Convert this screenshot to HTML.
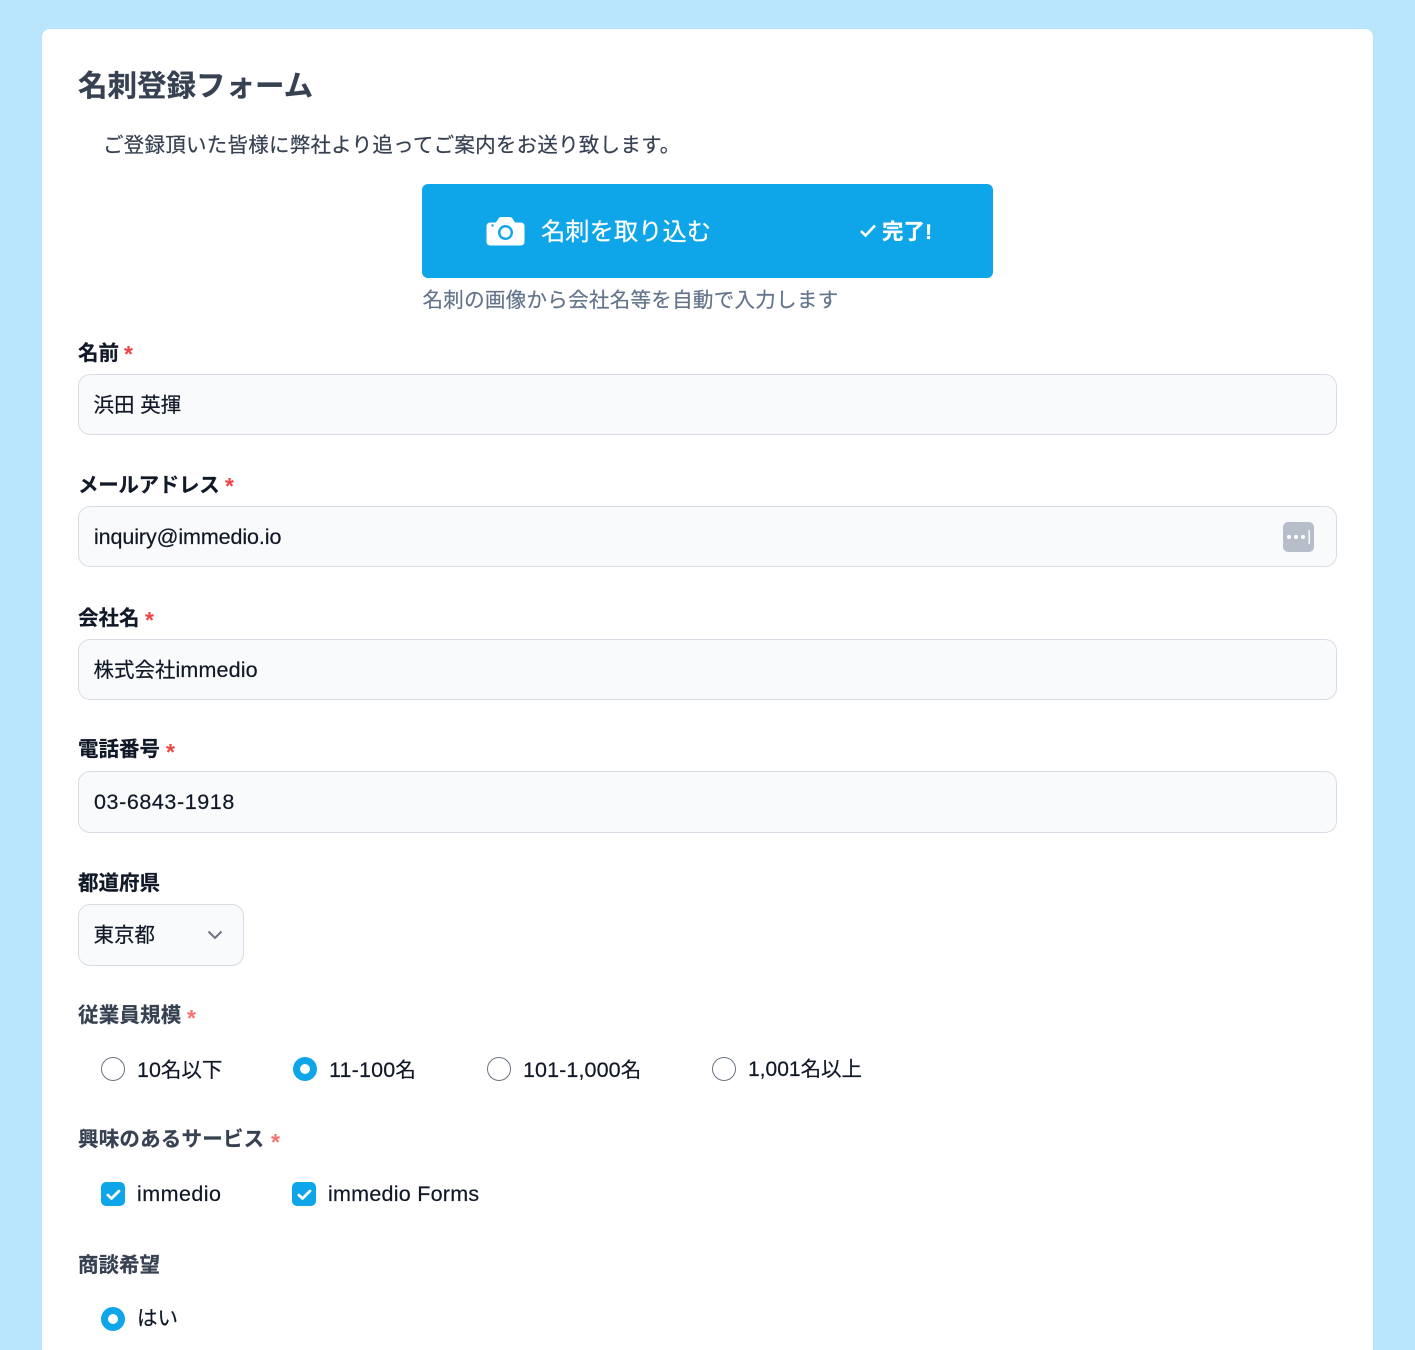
<!DOCTYPE html>
<html lang="ja">
<head>
<meta charset="utf-8">
<style>
html,body{margin:0;padding:0;width:1415px;height:1350px;overflow:hidden;background:#bae6fd;}
body{font-family:"Liberation Sans","Noto Sans CJK JP",sans-serif;position:relative;}
.card{position:absolute;left:42px;top:29px;width:1331px;height:1340px;background:#fff;border-radius:8px;}
.t{position:absolute;white-space:nowrap;line-height:28px;font-size:20.5px;color:#111827;-webkit-text-stroke:.2px currentColor;}
.l{font-size:21.5px;}
.b{font-weight:700;}
.g{color:#374151;}
.s{position:absolute;font-size:23px;line-height:28px;font-weight:700;color:#ef4444;}
.s2{color:#f87171;}
.i{position:absolute;left:78px;width:1257px;height:59px;background:#f9fafb;border:1px solid #d9dde3;border-radius:12px;}
.r{position:absolute;width:22px;height:22px;border:1px solid #6b7280;border-radius:50%;background:#fff;}
.ro{position:absolute;width:24px;height:24px;border-radius:50%;background:#0ea5e9;}
.ro:after{content:"";position:absolute;left:7px;top:7px;width:10px;height:10px;border-radius:50%;background:#fff;}
.c{position:absolute;width:24px;height:24px;border-radius:5px;background:#0ea5e9;}
.c svg{display:block;}
</style>
</head>
<body>
<div class="card"></div>

<div class="t b g" style="left:78px;top:69px;font-size:29.5px;line-height:36px;">名刺登録フォーム</div>
<div class="t g" style="left:103px;top:132px;letter-spacing:.25px;">ご登録頂いた皆様に弊社より追ってご案内をお送り致します。</div>

<div style="position:absolute;left:422px;top:184px;width:571px;height:94px;background:#0ea5e9;border-radius:6px;"></div>
<svg style="position:absolute;left:486px;top:216px;" width="39" height="30" viewBox="0 0 39 30">
  <path d="M4.500 6.500H10L12.500 2.500Q13.500 1 15.500 1H23.500Q25.500 1 26.500 2.500L29 6.500H34.500Q38.500 6.500 38.500 10.500V25.500Q38.500 29.500 34.500 29.500H4.500Q.5 29.500 .5 25.500V10.500Q.5 6.500 4.500 6.500z" fill="#fff"/>
  <circle cx="19.500" cy="16.500" r="6.300" fill="none" stroke="#0ea5e9" stroke-width="2.400"/>
  <circle cx="6.500" cy="9.500" r="1.200" fill="#0ea5e9"/>
</svg>
<div class="t" style="left:541px;top:219px;font-size:24.3px;color:#fff;">名刺を取り込む</div>
<svg style="position:absolute;left:859px;top:223px;" width="18" height="15" viewBox="0 0 18 15">
  <path d="M2 8l4.500 4.500L16 2.500" fill="none" stroke="#fff" stroke-width="2.600"/>
</svg>
<div class="t b" style="left:882px;top:218px;font-size:21.500px;color:#fff;">完了!</div>
<div class="t" style="left:422.500px;top:287px;color:#64748b;letter-spacing:.3px;">名刺の画像から会社名等を自動で入力します</div>

<div class="t b" style="left:78px;top:340px;">名前</div><div class="s" style="left:124px;top:340px;">*</div>
<div class="i" style="top:374px;"></div>
<div class="t" style="left:93.500px;top:392px;">浜田 英揮</div>

<div class="t b" style="left:78px;top:472px;letter-spacing:-.3px;">メールアドレス</div><div class="s" style="left:225px;top:472px;">*</div>
<div class="i" style="top:506px;"></div>
<div class="t l" style="left:94px;top:523px;letter-spacing:-.1px;">inquiry@immedio.io</div>
<svg style="position:absolute;left:1283px;top:522px;" width="31" height="30" viewBox="0 0 31 30">
  <rect width="31" height="30" rx="5" fill="#b8bec9"/>
  <circle cx="6" cy="15" r="2" fill="#fff"/>
  <circle cx="13" cy="15" r="2" fill="#fff"/>
  <circle cx="20" cy="15" r="2" fill="#fff"/>
  <rect x="25.500" y="8" width="1.400" height="14" fill="#fff"/>
</svg>

<div class="t b" style="left:78px;top:605px;">会社名</div><div class="s" style="left:145px;top:606px;">*</div>
<div class="i" style="top:639px;"></div>
<div class="t" style="left:93.500px;top:656px;">株式会社<span class="l" style="letter-spacing:.15px;">immedio</span></div>

<div class="t b" style="left:78px;top:736px;">電話番号</div><div class="s" style="left:166px;top:738px;">*</div>
<div class="i" style="top:771px;height:60px;"></div>
<div class="t l" style="left:94px;top:788px;letter-spacing:.58px;">03-6843-1918</div>

<div class="t b" style="left:78px;top:870px;">都道府県</div>
<div class="i" style="top:904px;width:164px;height:60px;"></div>
<div class="t" style="left:93.500px;top:922px;">東京都</div>
<svg style="position:absolute;left:206px;top:928px;" width="18" height="14" viewBox="0 0 18 14">
  <path d="M2.500 3.500L9 10l6.500-6.500" fill="none" stroke="#6b7280" stroke-width="2"/>
</svg>

<div class="t b g" style="left:78px;top:1002px;letter-spacing:.2px;">従業員規模</div><div class="s s2" style="left:187px;top:1004px;">*</div>
<div class="r" style="left:101px;top:1057px;"></div>
<div class="t" style="left:137px;top:1056px;"><span class="l">10</span>名以下</div>
<div class="ro" style="left:293px;top:1057px;"></div>
<div class="t" style="left:329px;top:1056px;"><span class="l" style="letter-spacing:.17px;">11-100</span>名</div>
<div class="r" style="left:487px;top:1057px;"></div>
<div class="t" style="left:523px;top:1056px;"><span class="l" style="letter-spacing:.1px;">101-1,000</span>名</div>
<div class="r" style="left:712px;top:1057px;"></div>
<div class="t" style="left:748px;top:1056px;"><span class="l" style="font-size:21px;">1,001</span>名以上</div>

<div class="t b g" style="left:78px;top:1126px;letter-spacing:.2px;">興味のあるサービス</div><div class="s s2" style="left:271px;top:1128px;">*</div>
<div class="c" style="left:101px;top:1182px;"><svg width="24" height="24" viewBox="0 0 24 24"><path d="M6.800 13l3.700 3.500L18 9" fill="none" stroke="#fff" stroke-width="2.700" stroke-linecap="round" stroke-linejoin="round"/></svg></div>
<div class="t l" style="left:137px;top:1180px;letter-spacing:.45px;">immedio</div>
<div class="c" style="left:292px;top:1182px;"><svg width="24" height="24" viewBox="0 0 24 24"><path d="M6.800 13l3.700 3.500L18 9" fill="none" stroke="#fff" stroke-width="2.700" stroke-linecap="round" stroke-linejoin="round"/></svg></div>
<div class="t l" style="left:328px;top:1180px;letter-spacing:.25px;">immedio Forms</div>

<div class="t b g" style="left:78px;top:1252px;">商談希望</div>
<div class="ro" style="left:101px;top:1307px;"></div>
<div class="t" style="left:137px;top:1305px;">はい</div>
</body>
</html>
